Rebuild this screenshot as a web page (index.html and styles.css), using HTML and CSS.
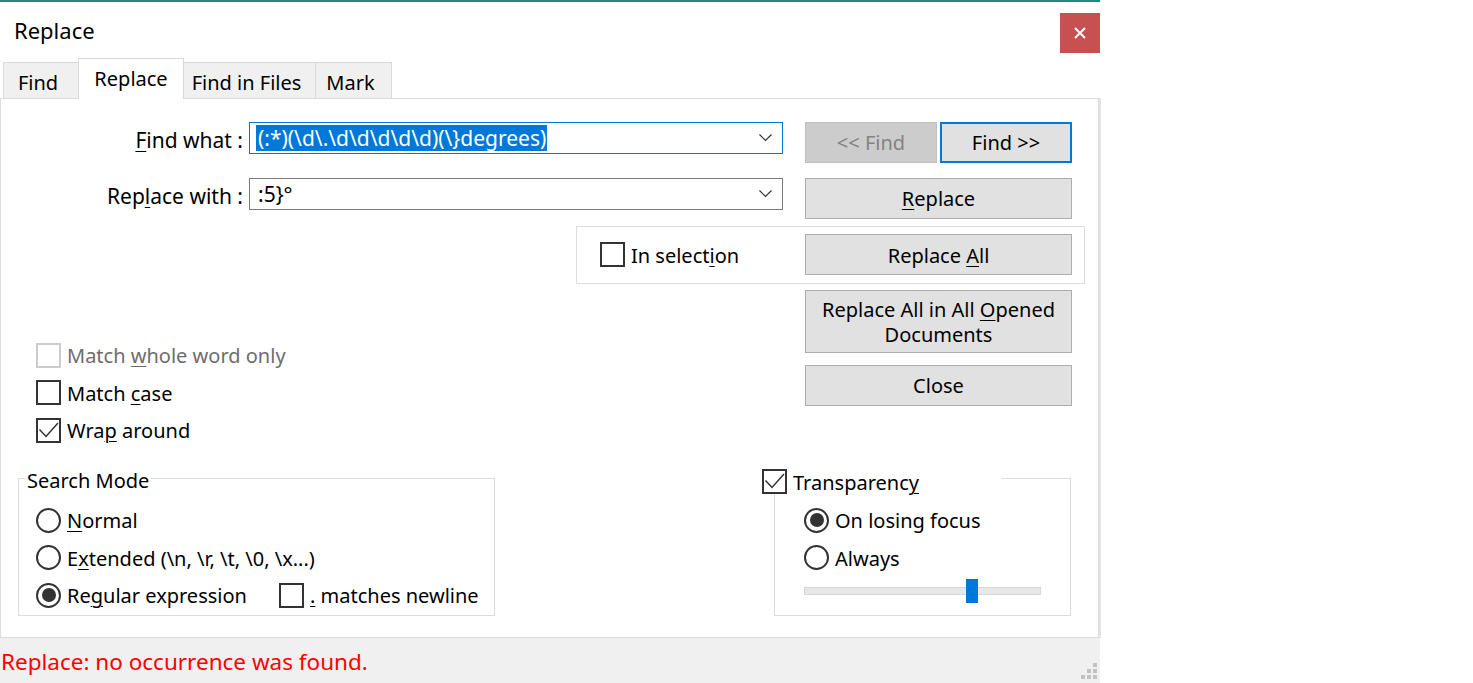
FILE: index.html
```html
<!DOCTYPE html>
<html lang="en">
<head>
<meta charset="utf-8">
<title>Replace</title>
<link rel="stylesheet" href="styles.css">
</head>
<body>
<div class="window">
  <div class="accent"></div>
  <div class="titlebar">
    <span class="title">Replace</span>
    <div class="close-btn">
      <svg width="12" height="12" viewBox="0 0 12 12"><path d="M1 1 L11 11 M11 1 L1 11" stroke="#fff" stroke-width="2" fill="none"/></svg>
    </div>
  </div>
  <div class="tabs">
    <div class="tab tab-find">Find</div>
    <div class="tab tab-active">Replace</div>
    <div class="tab tab-files">Find in Files</div>
    <div class="tab tab-mark">Mark</div>
  </div>
  <div class="panel">
    <div class="row">
      <div class="field-label"><span><u>F</u>ind what :</span></div>
      <div class="combo combo-focused">
        <div class="combo-text"><span class="sel">(:*)(\d\.\d\d\d\d\d)(\}degrees)</span></div>
        <svg class="chevron" width="13" height="8" viewBox="0 0 13 8"><path d="M0.5 0.5 L6.5 6.5 L12.5 0.5" stroke="#333" stroke-width="1.2" fill="none"/></svg>
      </div>
      <div class="btn-pair">
        <div class="btn btn-half btn-disabled"><span>&lt;&lt; Find</span></div>
        <div class="btn btn-half btn-default"><span>Find &gt;&gt;</span></div>
      </div>
    </div>
    <div class="row row-replace">
      <div class="field-label"><span>Rep<u>l</u>ace with :</span></div>
      <div class="combo">
        <div class="combo-text plain">:5}°</div>
        <svg class="chevron" width="13" height="8" viewBox="0 0 13 8"><path d="M0.5 0.5 L6.5 6.5 L12.5 0.5" stroke="#333" stroke-width="1.2" fill="none"/></svg>
      </div>
      <div class="btn btn-wide btn-gap"><span><u>R</u>eplace</span></div>
    </div>
    <div class="selgroup">
      <div class="check"><span class="box"></span><span class="lbl">In select<u>i</u>on</span></div>
      <div class="btn btn-wide"><span>Replace <u>A</u>ll</span></div>
    </div>
    <div class="mid">
      <div class="options">
        <div class="check disabled"><span class="box"></span><span class="lbl">Match <u>w</u>hole word only</span></div>
        <div class="check"><span class="box"></span><span class="lbl">Match <u>c</u>ase</span></div>
        <div class="check"><span class="box"><svg width="21" height="21" viewBox="0 0 21 21"><path d="M1.5 9.5 L8 16.5 L20 3" stroke="#333" stroke-width="1.5" fill="none"/></svg></span><span class="lbl">Wra<u>p</u> around</span></div>
      </div>
      <div class="actions">
        <div class="btn btn-wide btn-tall"><span>Replace All in All <u>O</u>pened<br>Documents</span></div>
        <div class="btn btn-wide"><span>Close</span></div>
      </div>
    </div>
    <div class="groups">
      <fieldset class="group group-mode">
        <legend class="legend-text">Search Mode</legend>
        <div class="group-body">
          <div class="check"><span class="radio"></span><span class="lbl"><u>N</u>ormal</span></div>
          <div class="check"><span class="radio"></span><span class="lbl">E<u>x</u>tended (\n, \r, \t, \0, \x...)</span></div>
          <div class="mode-row">
            <div class="check check-regex"><span class="radio radio-on"><span class="dot"></span></span><span class="lbl">Re<u>g</u>ular expression</span></div>
            <div class="check"><span class="box"></span><span class="lbl"><u>.</u> matches newline</span></div>
          </div>
        </div>
      </fieldset>
      <fieldset class="group group-transp">
        <legend class="legend-check">
          <span class="box"><svg width="21" height="21" viewBox="0 0 21 21"><path d="M1.5 9.5 L8 16.5 L20 3" stroke="#333" stroke-width="1.5" fill="none"/></svg></span><span class="legend-label">Transparenc<u>y</u></span>
        </legend>
        <div class="group-body transp-body">
          <div class="check"><span class="radio radio-on"><span class="dot"></span></span><span class="lbl">On losing focus</span></div>
          <div class="check"><span class="radio"></span><span class="lbl">Always</span></div>
          <div class="slider">
            <div class="track"></div>
            <div class="thumb" style="left: 162px"></div>
          </div>
        </div>
      </fieldset>
    </div>
  </div>
  <div class="status">
    <span class="status-text">Replace: no occurrence was found.</span>
    <svg class="grip" width="16" height="16" viewBox="0 0 16 16">
      <rect x="12" y="0" width="4" height="4" fill="#c2c2c2"/>
      <rect x="6" y="6" width="4" height="4" fill="#c2c2c2"/>
      <rect x="12" y="6" width="4" height="4" fill="#c2c2c2"/>
      <rect x="0" y="12" width="4" height="4" fill="#c2c2c2"/>
      <rect x="6" y="12" width="4" height="4" fill="#c2c2c2"/>
      <rect x="12" y="12" width="4" height="4" fill="#c2c2c2"/>
    </svg>
  </div>
</div>
</body>
</html>
```
FILE: styles.css
```css
* { box-sizing: border-box; }
html, body { margin: 0; padding: 0; background: #fff; }
body {
  font-family: "Noto Sans", "Open Sans", sans-serif;
  font-size: 20px;
  color: #000;
}
u { text-decoration-thickness: 1px; text-underline-offset: 3px; }

.window { width: 1100px; height: 683px; display: flex; flex-direction: column; }
.accent { height: 2px; background: #1f8a84; }

.titlebar { height: 56px; display: flex; justify-content: space-between; align-items: flex-start; }
.title { font-size: 22px; line-height: 30px; padding: 13px 0 0 14px; }
.close-btn {
  margin-top: 11px; width: 40px; height: 40px; background: #c75050;
  display: flex; align-items: center; justify-content: center;
}

.tabs { height: 40px; display: flex; align-items: flex-end; padding-left: 3px; position: relative; z-index: 1; }
.tab {
  height: 36px; border: 1px solid #d9d9d9; border-bottom: none; background: #f0f0f0;
  padding: 3px 6px 0 0; line-height: 34px; text-align: center; margin-left: -1px; white-space: nowrap;
}
.tab-find { margin-left: 0; width: 76px; }
.tab-active {
  width: 106px; height: 41px; margin-bottom: -1px; background: #fff;
  padding: 2px 0 0 0; line-height: 35px; position: relative; z-index: 2;
}
.tab-files { width: 133px; }
.tab-mark { width: 77px; }

.panel {
  width: 1099px; height: 542px; border: 1px solid #dcdcdc;
  box-shadow: 2px 0 0 #e3e3e3; padding-top: 23px;
}

.row { display: flex; align-items: flex-start; }
.row-replace { margin-top: 15px; }
.field-label {
  width: 242px; margin-right: 6px; text-align: right; line-height: 32px;
  padding-top: 2px; font-size: 21px; white-space: nowrap;
}
.combo {
  width: 534px; height: 32px; border: 1px solid #7a7a7a;
  display: flex; align-items: center; padding: 0 10px 0 6px;
}
.combo-focused { border-color: #0078d7; }
.combo-text { flex: 1; line-height: 26px; font-size: 21px; white-space: nowrap; }
.combo-text.plain { padding-left: 2px; }
.sel { display: inline-block; background: #0078d7; color: #fff; line-height: 26px; padding: 0 1px 0 2px; }
.chevron { flex: none; }

.btn {
  height: 41px; background: #e1e1e1; border: 1px solid #adadad;
  display: flex; align-items: center; justify-content: center; text-align: center;
  line-height: 25px; white-space: nowrap;
}
.btn > span { padding-top: 1px; }
.btn-half { width: 132px; }
.btn-wide { width: 267px; }
.btn-gap { margin-left: 22px; }
.btn-pair { margin-left: 22px; display: flex; gap: 3px; }
.btn-default { border: 2px solid #0078d7; }
.btn-disabled { background: #cccccc; border-color: #bfbfbf; color: #838383; }
.btn-tall { height: 63px; }

.selgroup {
  margin: 7px 0 0 575px; width: 509px; height: 58px; border: 1px solid #dcdcdc;
  display: flex; align-items: center; justify-content: space-between; padding: 0 12px 0 23px;
}

.check { display: flex; align-items: center; gap: 6px; height: 25px; line-height: 26px; white-space: nowrap; }
.lbl { padding-top: 2px; }
.box {
  flex: none; width: 25px; height: 25px; border: 2px solid #333; background: #fff;
  display: flex; align-items: center; justify-content: center;
}
.check.disabled { color: #6d6d6d; }
.check.disabled .box { border-color: #cccccc; }
.radio {
  flex: none; width: 25px; height: 25px; border: 2px solid #333; border-radius: 50%; background: #fff;
  display: flex; align-items: center; justify-content: center;
}
.dot { width: 14px; height: 14px; border-radius: 50%; background: #333; }

.mid { margin-top: 6px; display: flex; padding-left: 35px; }
.options { width: 769px; padding-top: 53px; display: flex; flex-direction: column; gap: 12.5px; }
.actions { display: flex; flex-direction: column; gap: 12px; }

.groups { margin-top: 21px; display: flex; padding-left: 17px; }
.group { margin: 0; padding: 0; border: 1px solid #dcdcdc; height: 152px; min-width: 0; }
.group-mode { width: 477px; }
.group-transp { width: 297px; margin-left: 279px; }
.legend-text { padding: 4px 2px 0 2px; margin-left: 6px; height: 30px; line-height: 26px; }
.legend-check {
  padding: 0; margin-left: -13px; width: 240px; height: 30px;
  display: flex; align-items: flex-end; gap: 6px;
}
.legend-label { line-height: 26px; margin-bottom: -2px; }

.group-body { padding: 14px 0 0 17px; display: flex; flex-direction: column; gap: 12.5px; }
.mode-row { display: flex; align-items: center; }
.check-regex { width: 243px; }
.transp-body { padding-left: 29px; }

.slider { position: relative; width: 237px; height: 24px; margin-top: -3.5px; padding-top: 8px; }
.track { height: 8px; background: #e7e7e7; border: 1px solid #d6d6d6; }
.thumb { position: absolute; top: 0; width: 12px; height: 24px; background: #0078d7; }

.status {
  flex: 1; background: #f0f0f0; color: #ff0000;
  display: flex; justify-content: space-between; padding-left: 1px;
}
.status-text { font-size: 22.5px; line-height: 43px; padding-top: 2px; }
.grip { align-self: flex-end; margin: 0 3px 4px 0; }
```
